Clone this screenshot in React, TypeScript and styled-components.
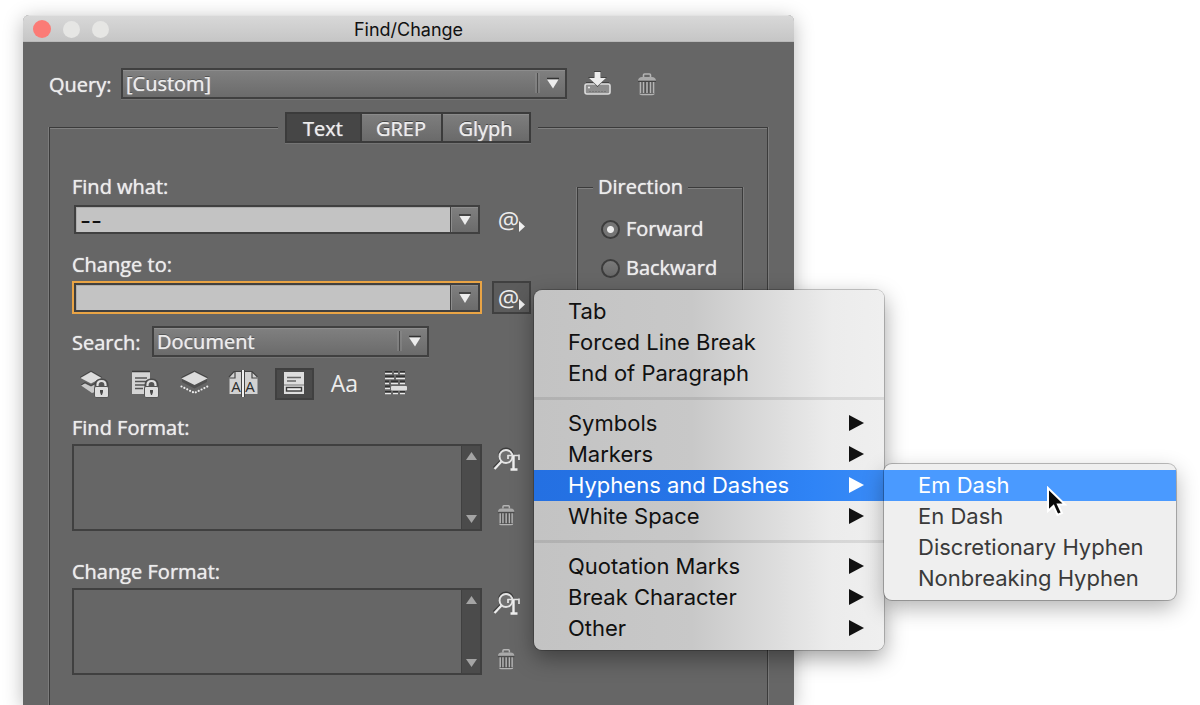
import React from "react";
import styled, { createGlobalStyle, css } from "styled-components";

const LABEL_FONT = '"Open Sans", "Noto Sans", sans-serif';
const SYSTEM_FONT = 'Inter, Roboto, "Liberation Sans", sans-serif';

const GlobalStyle = createGlobalStyle`
  *, *::before, *::after { box-sizing: border-box; }
  html, body { margin: 0; background: #fff; }
  button, input, select, textarea { font: inherit; color: inherit; margin: 0; padding: 0; }
`;

const Page = styled.main`
  display: flex;
  min-height: 100vh;
  padding: 15px 406px 0 23px;
  overflow: hidden;
  font-family: ${LABEL_FONT};
  font-size: 20px;
  font-weight: 500;
  line-height: 24px;
  color: #ececec;
  text-shadow: 0 0 1px #ececec;
`;

const DialogWindow = styled.section`
  display: flex;
  flex: 1;
  flex-direction: column;
  min-width: 770px;
  border-radius: 6px 6px 0 0;
  background: #666;
  box-shadow: 0 4px 20px rgba(0, 0, 0, 0.28);
`;

const TitleBar = styled.header`
  display: grid;
  grid-template-columns: 1fr auto 1fr;
  align-items: center;
  height: 27px;
  padding: 0 10px;
  border-top: 1px solid #e2e2e2;
  border-bottom: 1px solid #b9b9b9;
  border-radius: 6px 6px 0 0;
  background: linear-gradient(#d8d8d8, #c6c6c6);
`;

const TrafficLights = styled.div`
  display: flex;
  align-items: center;
  gap: 12px;
`;

const Light = styled.button<{ $close?: boolean }>`
  width: ${(p) => (p.$close ? 18 : 17)}px;
  height: ${(p) => (p.$close ? 18 : 17)}px;
  border: 0;
  border-radius: 50%;
  background: ${(p) => (p.$close ? "#fb7b76" : "#e6e6e4")};
`;

const Title = styled.h1`
  margin: 0;
  padding-top: 2px;
  font-family: ${SYSTEM_FONT};
  font-size: 18px;
  font-weight: 400;
  line-height: 24px;
  color: #111;
  text-shadow: none;
`;

const DialogBody = styled.div`
  display: flex;
  flex: 1;
  flex-direction: column;
  padding: 26px 26px 0;
`;

const QueryRow = styled.div`
  display: flex;
  align-items: center;
  height: 31px;
`;

const RowLabel = styled.label<{ $width: number }>`
  flex: 0 0 ${(p) => p.$width}px;
  padding-top: 2px;
`;

const SelectFrame = styled.div<{ $width: number }>`
  position: relative;
  flex: 0 1 ${(p) => p.$width}px;
  height: 31px;
`;

const raised = css`
  border: 2px solid #404040;
  background: linear-gradient(#808080, #6b6b6b);
  box-shadow: inset 0 1px #8d8d8d, 0 1px #747474;
`;

const StyledSelect = styled.select`
  ${raised}
  width: 100%;
  height: 100%;
  padding: 0 36px 0 3px;
  appearance: none;
  border-radius: 0;
  outline: none;
  text-shadow: 0 0 1px #ececec, 0 -1px #444;
`;

const SelectMark = styled.svg`
  position: absolute;
  top: 0;
  right: 0;
  pointer-events: none;
`;

const IconButton = styled.button<{ $pressed?: string; $w?: number; $h?: number }>`
  display: flex;
  align-items: center;
  justify-content: center;
  width: ${(p) => p.$w ?? 39}px;
  height: ${(p) => p.$h ?? 32}px;
  border: 0;
  background: ${(p) => p.$pressed ?? "none"};
  box-shadow: ${(p) => (p.$pressed ? "inset 0 0 0 2px #404040" : "none")};
`;

const QueryActions = styled.div`
  display: flex;
  gap: 17px;
  margin-left: 15px;
`;

const etched = css`
  min-width: 0;
  margin: 0;
  border: 1px solid #3b3b3b;
  box-shadow: -1px 0 #7c7c7c, 1px 0 #7c7c7c, inset 0 1px #808080;
`;

const Panel = styled.fieldset`
  ${etched}
  flex: 1;
  margin-top: 13px;
  padding: 32px 24px 29px 22px;
  border-bottom: 0;
`;

const TabLegend = styled.legend`
  margin: 0 auto;
  padding: 0 7px;
  background: #666;
`;

const TabList = styled.div`
  display: flex;
  height: 31px;
  border: 2px solid #3b3b3b;
  box-shadow: 0 1px #747474;
`;

const Tab = styled.button<{ $width: number; $active?: boolean }>`
  width: ${(p) => p.$width}px;
  padding-top: 2px;
  border: 0;
  background: ${(p) => (p.$active ? "#464646" : "linear-gradient(#7e7e7e, #6a6a6a)")};
  box-shadow: ${(p) => (p.$active ? "none" : "inset 0 1px #8a8a8a")};
  text-shadow: 0 0 1px #ececec, 0 -1px #333;
  & + & { border-left: 2px solid #3b3b3b; }
`;

const Columns = styled.div`
  display: flex;
  align-items: flex-start;
  justify-content: space-between;
`;

const Fields = styled.div`
  display: flex;
  flex-direction: column;
  width: 460px;
`;

const Field = styled.div<{ $after: number }>`
  display: flex;
  flex-direction: column;
  gap: 4px;
  margin-bottom: ${(p) => p.$after}px;
`;

const FieldRow = styled.div`
  display: flex;
  gap: 10px;
  position: relative;
`;

const Combo = styled.div<{ $focused?: boolean }>`
  display: flex;
  width: 410px;
  height: 33px;
  border: 2px solid ${(p) => (p.$focused ? "#e9a445" : "transparent")};
`;

const ComboInput = styled.input`
  flex: 1;
  min-width: 0;
  padding: 2px 4px 0;
  border: 2px solid #404040;
  border-right-width: 1px;
  border-radius: 0;
  outline: none;
  background: #c3c3c3;
  box-shadow: inset 1px 1px #adadad;
  font-family: ${SYSTEM_FONT};
  font-size: 24px;
  font-weight: 400;
  color: #111;
  text-shadow: none;
`;

const ComboButton = styled.button`
  ${raised}
  display: flex;
  align-items: center;
  justify-content: center;
  width: 29px;
  border-left: 0;
  box-shadow: inset 1px 1px #8d8d8d;
`;

const AtGlyph = styled.span`
  font-family: ${LABEL_FONT};
  font-size: 24px;
  font-weight: 400;
  line-height: 24px;
`;

const SearchRow = styled.div`
  display: flex;
  align-items: center;
  margin-bottom: 11px;
`;

const ToolRow = styled.div`
  display: flex;
  gap: 11px;
  margin: 0 0 16px 3px;
`;

const CaseGlyph = styled.span`
  font-size: 23px;
  font-weight: 400;
  line-height: 28px;
  padding-bottom: 2px;
`;

const FormatBox = styled.div`
  display: flex;
  width: 410px;
  height: 87px;
  border: 2px solid #404040;
`;

const FormatText = styled.textarea`
  flex: 1;
  border: 0;
  outline: none;
  resize: none;
  background: #666;
`;

const ScrollTrack = styled.div`
  display: flex;
  flex-direction: column;
  align-items: center;
  justify-content: space-between;
  width: 19px;
  border-left: 1px solid #404040;
  background: #4b4b4b;
`;

const FormatActions = styled.div`
  display: flex;
  flex-direction: column;
  gap: 23px;
`;

const Direction = styled.fieldset`
  ${etched}
  width: 166px;
  padding: 18px 23px 20px;
`;

const DirectionLegend = styled.legend`
  margin-left: -8px;
  padding: 0 5px;
  background: #666;
`;

const RadioLabel = styled.label`
  display: flex;
  align-items: center;
  gap: 6px;
  & + & { margin-top: 15px; }
`;

const Radio = styled.input`
  flex: none;
  width: 19px;
  height: 19px;
  appearance: none;
  border: 2px solid #3c3c3c;
  border-radius: 50%;
  background: linear-gradient(#7a7a7a, #686868);
  &:checked { background: radial-gradient(circle, #eee 3px, #747474 4px); }
`;

const menuSurface = css`
  position: absolute;
  z-index: 2;
  margin: 0;
  padding: 6px 0;
  list-style: none;
  border-radius: 8px;
  font-family: ${SYSTEM_FONT};
  font-size: 22px;
  font-weight: 400;
  line-height: 30px;
  text-shadow: none;
`;

const Menu = styled.ul`
  ${menuSurface}
  left: 462px;
  top: 9px;
  width: 350px;
  background: linear-gradient(90deg, #c3c3c3, #c8c8c8 45%, #dcdcdc 68%, #ececec 85%, #efefef);
  box-shadow: 0 0 0 1px rgba(0, 0, 0, 0.2), 0 8px 22px rgba(0, 0, 0, 0.38);
  color: #111;
`;

const Submenu = styled.ul`
  ${menuSurface}
  left: 350px;
  top: -6px;
  width: 292px;
  background: #efefef;
  box-shadow: 0 0 0 1px rgba(0, 0, 0, 0.25), 0 8px 22px rgba(0, 0, 0, 0.3);
  color: #3a3a3a;
`;

const MenuEntry = styled.li`
  position: relative;
`;

const MenuButton = styled.button<{ $highlight?: string }>`
  display: flex;
  align-items: center;
  justify-content: space-between;
  width: 100%;
  height: 31px;
  padding: 0 19px 1px 34px;
  border: 0;
  background: ${(p) => p.$highlight ?? "none"};
  color: ${(p) => (p.$highlight ? "#fff" : "inherit")};
  white-space: nowrap;
`;

const Separator = styled.li`
  height: 3px;
  margin: 8px 0;
  background: rgba(0, 0, 0, 0.09);
`;

const Cursor = styled.svg`
  position: absolute;
  left: 162px;
  top: 22px;
  pointer-events: none;
`;

const DownArrow = () => (
  <svg width="13" height="12" aria-hidden="true">
    <path d="M1 1h12" stroke="#333" strokeWidth="1.500" />
    <path d="M1.500 2h11L7 11z" fill="#ececec" />
  </svg>
);

const Dropdown = ({ id, width, value }: { id: string; width: number; value: string }) => (
  <SelectFrame $width={width}>
    <StyledSelect id={id} defaultValue={value}>
      <option>{value}</option>
    </StyledSelect>
    <SelectMark width="36" height="31" aria-hidden="true">
      <path d="M5 5v20M8 5v20" stroke="#8c8c8c" />
      <path d="M6.500 5v20" stroke="#4c4c4c" />
      <path d="M16 10.500h12" stroke="#333" strokeWidth="1.500" />
      <path d="M16 11.500h11.500L22 20.500z" fill="#ececec" />
    </SelectMark>
  </SelectFrame>
);

const DownloadIcon = () => (
  <svg width="30" height="28" aria-hidden="true">
    <rect x="2" y="14" width="25" height="10" rx="2" fill="#8e8e8e" stroke="#dcdcdc" strokeWidth="1.600" />
    <path d="M3 12.500h23" stroke="#444" />
    <path d="M11 1h7v6h6L14.500 17 5 7h6z" fill="#444" />
    <path d="M11.500 2h6v6h5.500l-8.500 8L6 8h5.500z" fill="#ececec" />
    <circle cx="6" cy="17.500" r="1" fill="#eee" />
    <path d="M6 21.500h18" stroke="#777" strokeDasharray="2 1" />
  </svg>
);

const TrashIcon = ({ size = 24 }: { size?: number }) => (
  <svg width={(size * 20) / 24} height={size} viewBox="0 0 20 24" fill="none" aria-hidden="true">
    <path d="M6.500 5V3q0-1 1-1h5q1 0 1 1v2" stroke="#b4b4b4" strokeWidth="1.600" />
    <path d="M1 8.500Q1.500 5 5 5h10q3.500 0 4 3.500z" fill="#aaa" />
    <path d="M1 9.500h18" stroke="#444" />
    <path d="M3 10v11q0 2 2 2h10q2 0 2-2V10z" fill="#505050" />
    <path d="M3.500 10v11M6.500 10v11M10 10v11M13.500 10v11M16.500 10v11" stroke="#b4b4b4" strokeWidth="1.600" />
    <path d="M3 21.500q0 1 2 1h10q2 0 2-1" stroke="#b4b4b4" strokeWidth="1.600" />
  </svg>
);

const Lock = () => (
  <g>
    <path d="M20 19v-2q0-6 6.500-6t6.500 6v2" fill="#555" stroke="#444" />
    <path d="M22.500 20v-3q0-4 4-4t4 4v3" fill="none" stroke="#e0e0e0" strokeWidth="2.200" />
    <rect x="19.500" y="18.500" width="14" height="11" rx="1.500" fill="#dedede" stroke="#555" />
    <path d="M25 22h3v2l-1 3h-1l-1-3z" fill="#4a4a4a" />
  </g>
);

const LayersLockIcon = () => (
  <svg width="39" height="32" aria-hidden="true">
    <path d="M5 9.500 16 3l11 6.500" fill="none" stroke="#444" />
    <path d="M5.500 10 16 4l10.500 6L16 15.500z" fill="#dcdcdc" />
    <path d="M6 17.500 10 15.500 16 18.500 20 16.500V24l-3 1z" fill="#c8c8c8" />
    <path d="M6 17 10 14.500 16 17.500l5-2.500" fill="none" stroke="#444" />
    <Lock />
  </svg>
);

const DocLockIcon = () => (
  <svg width="39" height="32" aria-hidden="true">
    <path d="M7 4h18v22H7z" fill="#d4d4d4" />
    <path d="M7 3.500h18" stroke="#3a3a3a" strokeWidth="1.500" />
    <path d="M10 10h12M10 13.500h12M10 17h10M10 20.500h8" stroke="#555" strokeWidth="1.500" />
    <Lock />
  </svg>
);

const LayersIcon = () => (
  <svg width="39" height="32" aria-hidden="true">
    <path d="M7 11v3l12.500 6.500L32 14v-3" fill="#505050" />
    <path d="M6.500 9.500 19.500 3l13 6.500" fill="none" stroke="#444" />
    <path d="M6.500 10.500 19.500 4l13 6.500-13 6.500z" fill="#dcdcdc" />
    <path d="m6.500 18.500 13 6.500 13-6.500" fill="none" stroke="#ececec" strokeWidth="2.200" strokeLinecap="round" strokeDasharray="0 3.200" />
  </svg>
);

const MasterPagesIcon = () => (
  <svg width="39" height="32" aria-hidden="true">
    <path d="M4.500 9 9 4h7.500v22h-12zM19.500 4H27l5.500 5v17h-13z" fill="#d2d2d2" />
    <path d="M4 9 9 3.500h7.500M19.500 3.500H27L32.500 9M4.500 10H10V4M32.500 10H27V4" fill="none" stroke="#444" strokeWidth="1.200" />
    <path d="M18 2v27" stroke="#444" strokeWidth="4" />
    <path d="M18 2v27" stroke="#f0f0f0" strokeWidth="2" />
    <g fontFamily="Open Sans" fontSize="15" fill="#2c2c2c" textAnchor="middle" style={{ textShadow: "none" }}>
      <text x="11" y="24">A</text>
      <text x="25" y="24">A</text>
    </g>
  </svg>
);

const FootnoteIcon = () => (
  <svg width="39" height="32" aria-hidden="true">
    <path d="M9 4h20v22H9z" fill="#dedede" />
    <path d="M12 9.500h14M12 13h9" stroke="#666" strokeWidth="1.300" />
    <path d="M9 17h20" stroke="#777" />
    <rect x="11.500" y="19.500" width="15" height="3.500" fill="#eee" stroke="#3a3a3a" strokeWidth="1.400" />
  </svg>
);

const WholeWordIcon = () => (
  <svg width="39" height="32" fill="none" aria-hidden="true">
    <path d="M10 4h7M19 4h4M25 4h5M10 8.500h9M21 8.500h9M10 13.500h4M16 13.500h7M25 13.500h5M10 18.500h5M10 24h6M18 24h5M25 24h5" stroke="#303030" strokeWidth="2" />
    <path d="M10 5.500h7M19 5.500h4M25 5.500h5M10 10.500h9M21 10.500h9M10 15.500h4M16 15.500h7M25 15.500h5M10 20.500h5M10 25.500h6M18 25.500h5M25 25.500h5" stroke="#e8e8e8" strokeWidth="1.500" />
    <rect x="16" y="18" width="16" height="4.500" rx="1" fill="#dedede" />
  </svg>
);

const FormatIcon = () => (
  <svg width="30" height="26" fill="none" aria-hidden="true">
    <path d="m2 21 7-7" stroke="#3c3c3c" strokeWidth="3" />
    <circle cx="14" cy="8.500" r="7" stroke="#3c3c3c" strokeWidth="2" />
    <path d="m2.500 22 7-7.500" stroke="#ececec" strokeWidth="2.300" />
    <circle cx="14" cy="9.500" r="6.500" fill="#707070" stroke="#e4e4e4" strokeWidth="2" />
    <path d="M15.500 8.500h11M16 8v4M27 7.500V13" stroke="#e4e4e4" strokeWidth="1.700" />
    <path d="M21.500 9v13M18.500 22.500h7" stroke="#f0f0f0" strokeWidth="2.400" />
  </svg>
);

const ScrollMark = ({ down }: { down?: boolean }) => (
  <svg width="13" height="22" aria-hidden="true">
    <path d={down ? "M1 8h11l-5.500 8z" : "M1 14h11L6.500 6z"} fill="#a4a4a4" />
  </svg>
);

const Toolbar = () => (
  <ToolRow>
    <IconButton aria-label="Include locked layers"><LayersLockIcon /></IconButton>
    <IconButton aria-label="Include locked stories"><DocLockIcon /></IconButton>
    <IconButton aria-label="Include hidden layers"><LayersIcon /></IconButton>
    <IconButton aria-label="Include master pages"><MasterPagesIcon /></IconButton>
    <IconButton aria-label="Include footnotes" $pressed="#4a4a4a"><FootnoteIcon /></IconButton>
    <IconButton aria-label="Case sensitive"><CaseGlyph>Aa</CaseGlyph></IconButton>
    <IconButton aria-label="Whole word"><WholeWordIcon /></IconButton>
  </ToolRow>
);

const SpecialButton = ({ active }: { active?: boolean }) => (
  <IconButton $h={33} $pressed={active ? "#5c5c5c" : undefined} aria-label="Special characters for search">
    <AtGlyph>@</AtGlyph>
    <svg width="6" height="24" aria-hidden="true">
      <path d="M0 13l6 5.500-6 5.500z" fill="#f0f0f0" />
    </svg>
  </IconButton>
);

const FormatField = ({ id, label, after }: { id: string; label: string; after: number }) => (
  <Field $after={after}>
    <label htmlFor={id}>{label}</label>
    <FieldRow>
      <FormatBox>
        <FormatText id={id} readOnly />
        <ScrollTrack>
          <ScrollMark />
          <ScrollMark down />
        </ScrollTrack>
      </FormatBox>
      <FormatActions>
        <IconButton $w={30} aria-label="Specify attributes"><FormatIcon /></IconButton>
        <IconButton $w={28} aria-label="Clear attributes"><TrashIcon size={22} /></IconButton>
      </FormatActions>
    </FieldRow>
  </Field>
);

const Chevron = () => (
  <svg width="16" height="16" fill="currentColor" aria-hidden="true">
    <path d="M0 0l15 8-15 8z" />
  </svg>
);

const DASHES = ["Em Dash", "En Dash", "Discretionary Hyphen", "Nonbreaking Hyphen"];

const MenuItem = ({ label, nested }: { label: string; nested?: boolean }) => (
  <MenuEntry>
    <MenuButton>{label}{nested && <Chevron />}</MenuButton>
  </MenuEntry>
);

const SpecialMenu = () => (
  <Menu>
    <MenuItem label="Tab" />
    <MenuItem label="Forced Line Break" />
    <MenuItem label="End of Paragraph" />
    <Separator />
    <MenuItem label="Symbols" nested />
    <MenuItem label="Markers" nested />
    <MenuEntry>
      <MenuButton $highlight="linear-gradient(90deg, #2470e2, #2675e8 50%, #2f84f6 80%, #3a8bf6)">
        Hyphens and Dashes<Chevron />
      </MenuButton>
      <Submenu>
        {DASHES.map((name, i) => (
          <MenuEntry key={name}>
            <MenuButton $highlight={i === 0 ? "#4a9aff" : undefined}>{name}</MenuButton>
          </MenuEntry>
        ))}
        <Cursor width="22" height="34" aria-hidden="true">
          <path d="M2 2v23l5.500-5 4 9 4.500-2-4-8.500h7z" fill="#0a0a0a" stroke="#fff" strokeWidth="2" />
        </Cursor>
      </Submenu>
    </MenuEntry>
    <MenuItem label="White Space" nested />
    <Separator />
    <MenuItem label="Quotation Marks" nested />
    <MenuItem label="Break Character" nested />
    <MenuItem label="Other" nested />
  </Menu>
);

export default function App() {
  return (
    <Page>
      <GlobalStyle />
      <DialogWindow aria-label="Find/Change">
        <TitleBar>
          <TrafficLights>
            <Light $close aria-label="Close" />
            <Light aria-label="Minimize" />
            <Light aria-label="Zoom" />
          </TrafficLights>
          <Title>Find/Change</Title>
        </TitleBar>
        <DialogBody>
          <QueryRow>
            <RowLabel htmlFor="query" $width={72}>Query:</RowLabel>
            <Dropdown id="query" width={446} value="[Custom]" />
            <QueryActions>
              <IconButton $w={32} aria-label="Save query"><DownloadIcon /></IconButton>
              <IconButton $w={32} aria-label="Delete query"><TrashIcon /></IconButton>
            </QueryActions>
          </QueryRow>
          <Panel>
            <TabLegend>
              <TabList>
                <Tab $width={73} $active>Text</Tab>
                <Tab $width={81}>GREP</Tab>
                <Tab $width={88}>Glyph</Tab>
              </TabList>
            </TabLegend>
            <Columns>
              <Fields>
                <Field $after={17}>
                  <label htmlFor="find">Find what:</label>
                  <FieldRow>
                    <Combo>
                      <ComboInput id="find" defaultValue="--" />
                      <ComboButton aria-label="Recent searches"><DownArrow /></ComboButton>
                    </Combo>
                    <SpecialButton />
                  </FieldRow>
                </Field>
                <Field $after={12}>
                  <label htmlFor="change">Change to:</label>
                  <FieldRow>
                    <Combo $focused>
                      <ComboInput id="change" />
                      <ComboButton aria-label="Recent replacements"><DownArrow /></ComboButton>
                    </Combo>
                    <SpecialButton active />
                    <SpecialMenu />
                  </FieldRow>
                </Field>
                <SearchRow>
                  <RowLabel htmlFor="scope" $width={80}>Search:</RowLabel>
                  <Dropdown id="scope" width={277} value="Document" />
                </SearchRow>
                <Toolbar />
                <FormatField id="find-format" label="Find Format:" after={29} />
                <FormatField id="change-format" label="Change Format:" after={0} />
              </Fields>
              <Direction>
                <DirectionLegend>Direction</DirectionLegend>
                <RadioLabel><Radio type="radio" name="direction" defaultChecked />Forward</RadioLabel>
                <RadioLabel><Radio type="radio" name="direction" />Backward</RadioLabel>
              </Direction>
            </Columns>
          </Panel>
        </DialogBody>
      </DialogWindow>
    </Page>
  );
}
